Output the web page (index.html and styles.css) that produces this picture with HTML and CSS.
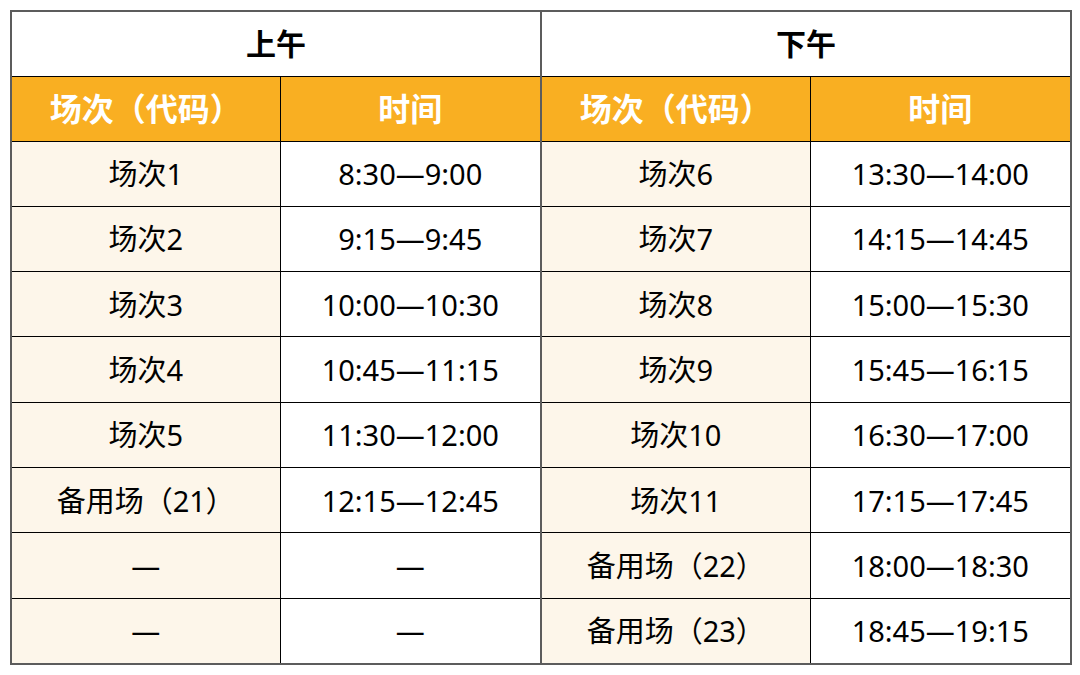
FILE: index.html
```html
<!DOCTYPE html>
<html lang="zh-CN">
<head>
<meta charset="utf-8">
<title>场次安排</title>
<link rel="stylesheet" href="styles.css">
</head>
<body>
<table class="schedule">
  <colgroup>
    <col class="c-name"><col class="c-time"><col class="c-name"><col class="c-time">
  </colgroup>
  <thead>
    <tr class="period">
      <th colspan="2" class="split">上午</th>
      <th colspan="2">下午</th>
    </tr>
    <tr class="labels">
      <th>场次（代码）</th><th class="split">时间</th>
      <th>场次（代码）</th><th>时间</th>
    </tr>
  </thead>
  <tbody>
    <tr><td class="name">场次1</td><td class="split">8:30—9:00</td><td class="name">场次6</td><td>13:30—14:00</td></tr>
    <tr><td class="name">场次2</td><td class="split">9:15—9:45</td><td class="name">场次7</td><td>14:15—14:45</td></tr>
    <tr><td class="name">场次3</td><td class="split">10:00—10:30</td><td class="name">场次8</td><td>15:00—15:30</td></tr>
    <tr><td class="name">场次4</td><td class="split">10:45—11:15</td><td class="name">场次9</td><td>15:45—16:15</td></tr>
    <tr><td class="name">场次5</td><td class="split">11:30—12:00</td><td class="name">场次10</td><td>16:30—17:00</td></tr>
    <tr><td class="name">备用场（21）</td><td class="split">12:15—12:45</td><td class="name">场次11</td><td>17:15—17:45</td></tr>
    <tr><td class="name">—</td><td class="split">—</td><td class="name">备用场（22）</td><td>18:00—18:30</td></tr>
    <tr><td class="name">—</td><td class="split">—</td><td class="name">备用场（23）</td><td>18:45—19:15</td></tr>
  </tbody>
</table>
</body>
</html>
```
FILE: styles.css
```css
html, body {
  margin: 0;
  padding: 0;
  background: #ffffff;
}
body {
  padding: 10px 0 0 10px;
  font-family: "Noto Sans", "Noto Sans CJK SC", sans-serif;
  color: #000;
}
.schedule {
  border-collapse: collapse;
  table-layout: fixed;
  width: 1060px;
  border: 2px solid #5c5c5c;
}
.c-name { width: 269px; }
.c-time { width: 261px; }
.schedule th,
.schedule td {
  border: 1px solid #000;
  text-align: center;
  vertical-align: middle;
  padding: 0;
  font-size: 29px;
  line-height: 1;
}
.schedule .split {
  border-right: 2px solid #5c5c5c;
}
.period th {
  height: 63.5px;
  font-size: 30px;
  font-weight: 700;
  color: #000;
  background: #fff;
  border-bottom: 1px solid #000;
}
.labels th {
  height: 64px;
  font-size: 32px;
  font-weight: 700;
  color: #fff;
  background: #f9af22;
}
.schedule td {
  height: 64.3px;
  background: #fff;
}
.schedule td.name {
  background: #fdf6ea;
}
```
